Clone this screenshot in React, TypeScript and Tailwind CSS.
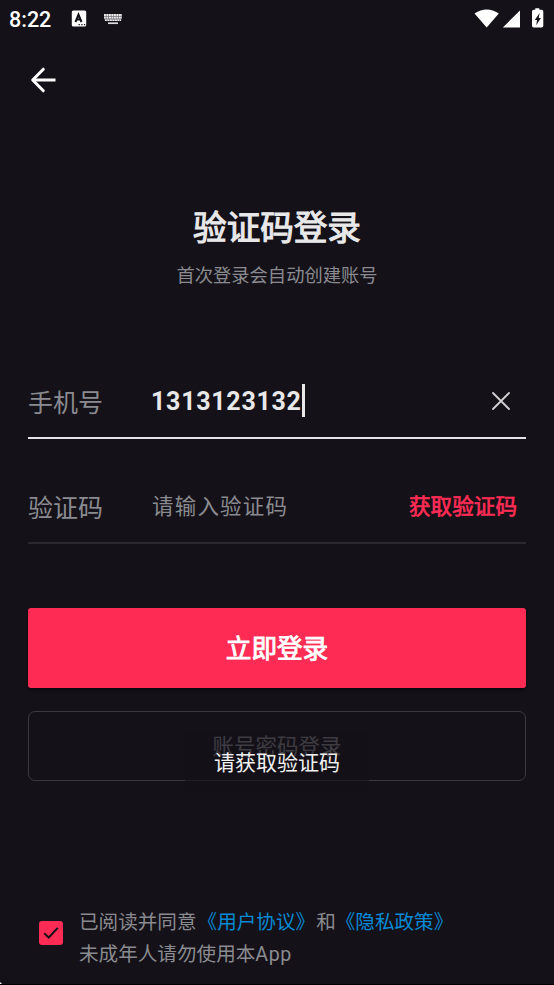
import React from "react";

const cjk = "font-[Roboto,'Noto_Sans_CJK_SC',sans-serif]";

function StatusBar() {
  return (
    <header className="flex h-[38px] items-center pl-[9px] pr-[10px] text-white">
      <span className="w-[62px] pt-[2px] text-[21.5px] leading-[36px] font-medium">8:22</span>
      <svg className="mt-[-1px] h-[17px] w-[16px]" viewBox="0 0 16 17">
        <rect x="0.8" y="0.5" width="14.4" height="16" rx="1.6" fill="#fff" />
        <path d="M4.5 12 7.5 4.6 10.5 12M5.5 9.6H9.5" fill="none" stroke="#141118" strokeWidth="2" />
        <path d="M7.6 14.6h1.3M10.3 14.6h1.3M13 14.6h1.2" stroke="#141118" strokeWidth="1.2" />
      </svg>
      <svg className="ml-[16px] mt-[-1px] h-[12px] w-[20px]" viewBox="0 0 20 12">
        <path d="M1 1h18v3.2L18 8H2L1 4.2Z" fill="#77757b" />
        <path d="M1 2h18M1 4.6h18" stroke="#eee" strokeWidth="1.8" strokeDasharray="1.8 .7" />
        <path d="M2 7.2h16" stroke="#eee" strokeWidth="1.6" strokeDasharray="1.8 .7" />
        <path d="M5 10.2h10" stroke="#ddd" strokeWidth="1.7" />
      </svg>
      <svg className="ml-auto h-[20px] w-[70px] overflow-visible" viewBox="0 0 70 20" fill="#fff">
        <path d="M.5 4.4Q12.7-3.5 24.8 4.4L12.7 18.5Z" />
        <path d="M28.8 18.5 46 1.5v17Z" />
        <path fillRule="evenodd" d="M61.3.8v-1.6h4V.8h2.3q1.7 0 1.7 1.7v14.3q0 1.7-1.7 1.7h-7.9q-1.7 0-1.7-1.7V2.5q0-1.7 1.7-1.7ZM65.6 4 60.8 11h2.3l-.9 5.3 4.7-7.3h-2.2Z" />
      </svg>
    </header>
  );
}

export default function App() {
  return (
    <div className={`${cjk} relative flex h-[985px] w-[554px] flex-col overflow-hidden border-b border-black bg-[#141118] text-[#8a8b90]`}>
      <StatusBar />
      <nav className="flex h-[84px] items-center pl-[30px]">
        <svg className="h-[26px] w-[27px]" viewBox="0 0 27 26" fill="none" stroke="#fff" strokeWidth="3">
          <path d="M25.5 13H3" />
          <path d="M13.3 2.2 2.7 13l10.6 10.8" strokeLinecap="round" strokeLinejoin="round" />
        </svg>
      </nav>

      <section className="flex flex-col items-center pt-[82px]">
        <h1 className="h-[50px] text-[33.6px] font-normal leading-[50px] text-[#e8e8e9] [-webkit-text-stroke:1.1px_#e8e8e9]">验证码登录</h1>
        <p className="mt-[8px] h-[28px] text-[18.3px] leading-[28px]">首次登录会自动创建账号</p>
      </section>

      <form className="mx-[28px] mt-[74px] flex flex-col" onSubmit={(e) => e.preventDefault()}>
        <div className="flex h-[75px] items-center border-b-2 border-[#e5e3e7]">
          <label className="w-[123px] pt-[7px] text-[25px]">手机号</label>
          <span className="pt-[3px] text-[25px] font-bold tracking-[0.72px] text-[#e8e8e9]">1313123132</span>
          <i className="h-[33px] w-[3px] bg-[#e8e8e9]" />
          <svg className="ml-auto mr-[16px] h-[18px] w-[18px]" viewBox="0 0 18 18" stroke="#d2d2d5" strokeWidth="1.8" strokeLinecap="round">
            <path d="m1 1 16 16M17 1 1 17" />
          </svg>
        </div>
        <div className="mt-[31px] flex h-[74px] items-center border-b-2 border-[#2b292e]">
          <label className="w-[124px] pt-[5px] text-[25px]">验证码</label>
          <span className="pt-[3px] text-[21.5px] tracking-[1.2px]">请输入验证码</span>
          <button className="ml-auto mr-[9px] pt-[3px] text-[21.6px] text-[#fe2c55] [-webkit-text-stroke:0.7px_#fe2c55]">获取验证码</button>
        </div>
        <button className="mt-[64px] h-[80px] rounded-[3px] bg-[#fe2c55] pt-[3px] text-[25.6px] text-white shadow-[0_2px_3px_#0b090e] [-webkit-text-stroke:0.9px_white]">立即登录</button>
        <button className="mt-[23px] h-[70px] rounded-[7px] border border-[#3c3a3f] pt-[2px] text-[21.5px]">账号密码登录</button>
      </form>

      <footer className="mt-[124px] flex items-start pl-[39px]">
        <svg className="mt-[16px] h-[24px] w-[24px]" viewBox="0 0 24 24">
          <rect width="24" height="24" rx="3" fill="#fe2c55" />
          <path d="m5.2 12.2 4.5 4.3 9.1-9.6" fill="none" stroke="#141118" strokeWidth="2" />
        </svg>
        <div className="ml-[16px] whitespace-nowrap text-[19.6px] leading-[32px]">
          <p className="pt-[2px]">已阅读并同意<a className="mx-[1px] text-[#0789d5]">《用户协议》</a>和<a className="text-[#0789d5]">《隐私政策》</a></p>
          <p>未成年人请勿使用本<span className="tracking-[0.5px]">App</span></p>
        </div>
      </footer>

      <div role="status" className="absolute left-[185px] top-[731px] flex h-[62px] w-[184px] items-center justify-center bg-[#141118]/65 pt-[3px] text-[21px] text-[#f0f0f1]">请获取验证码</div>
      <svg className="absolute bottom-[-1px] left-0 h-[3px] w-[3px]" viewBox="0 0 3 3"><path d="M0 0 3 3H0Z" fill="#fff" /></svg>
    </div>
  );
}
